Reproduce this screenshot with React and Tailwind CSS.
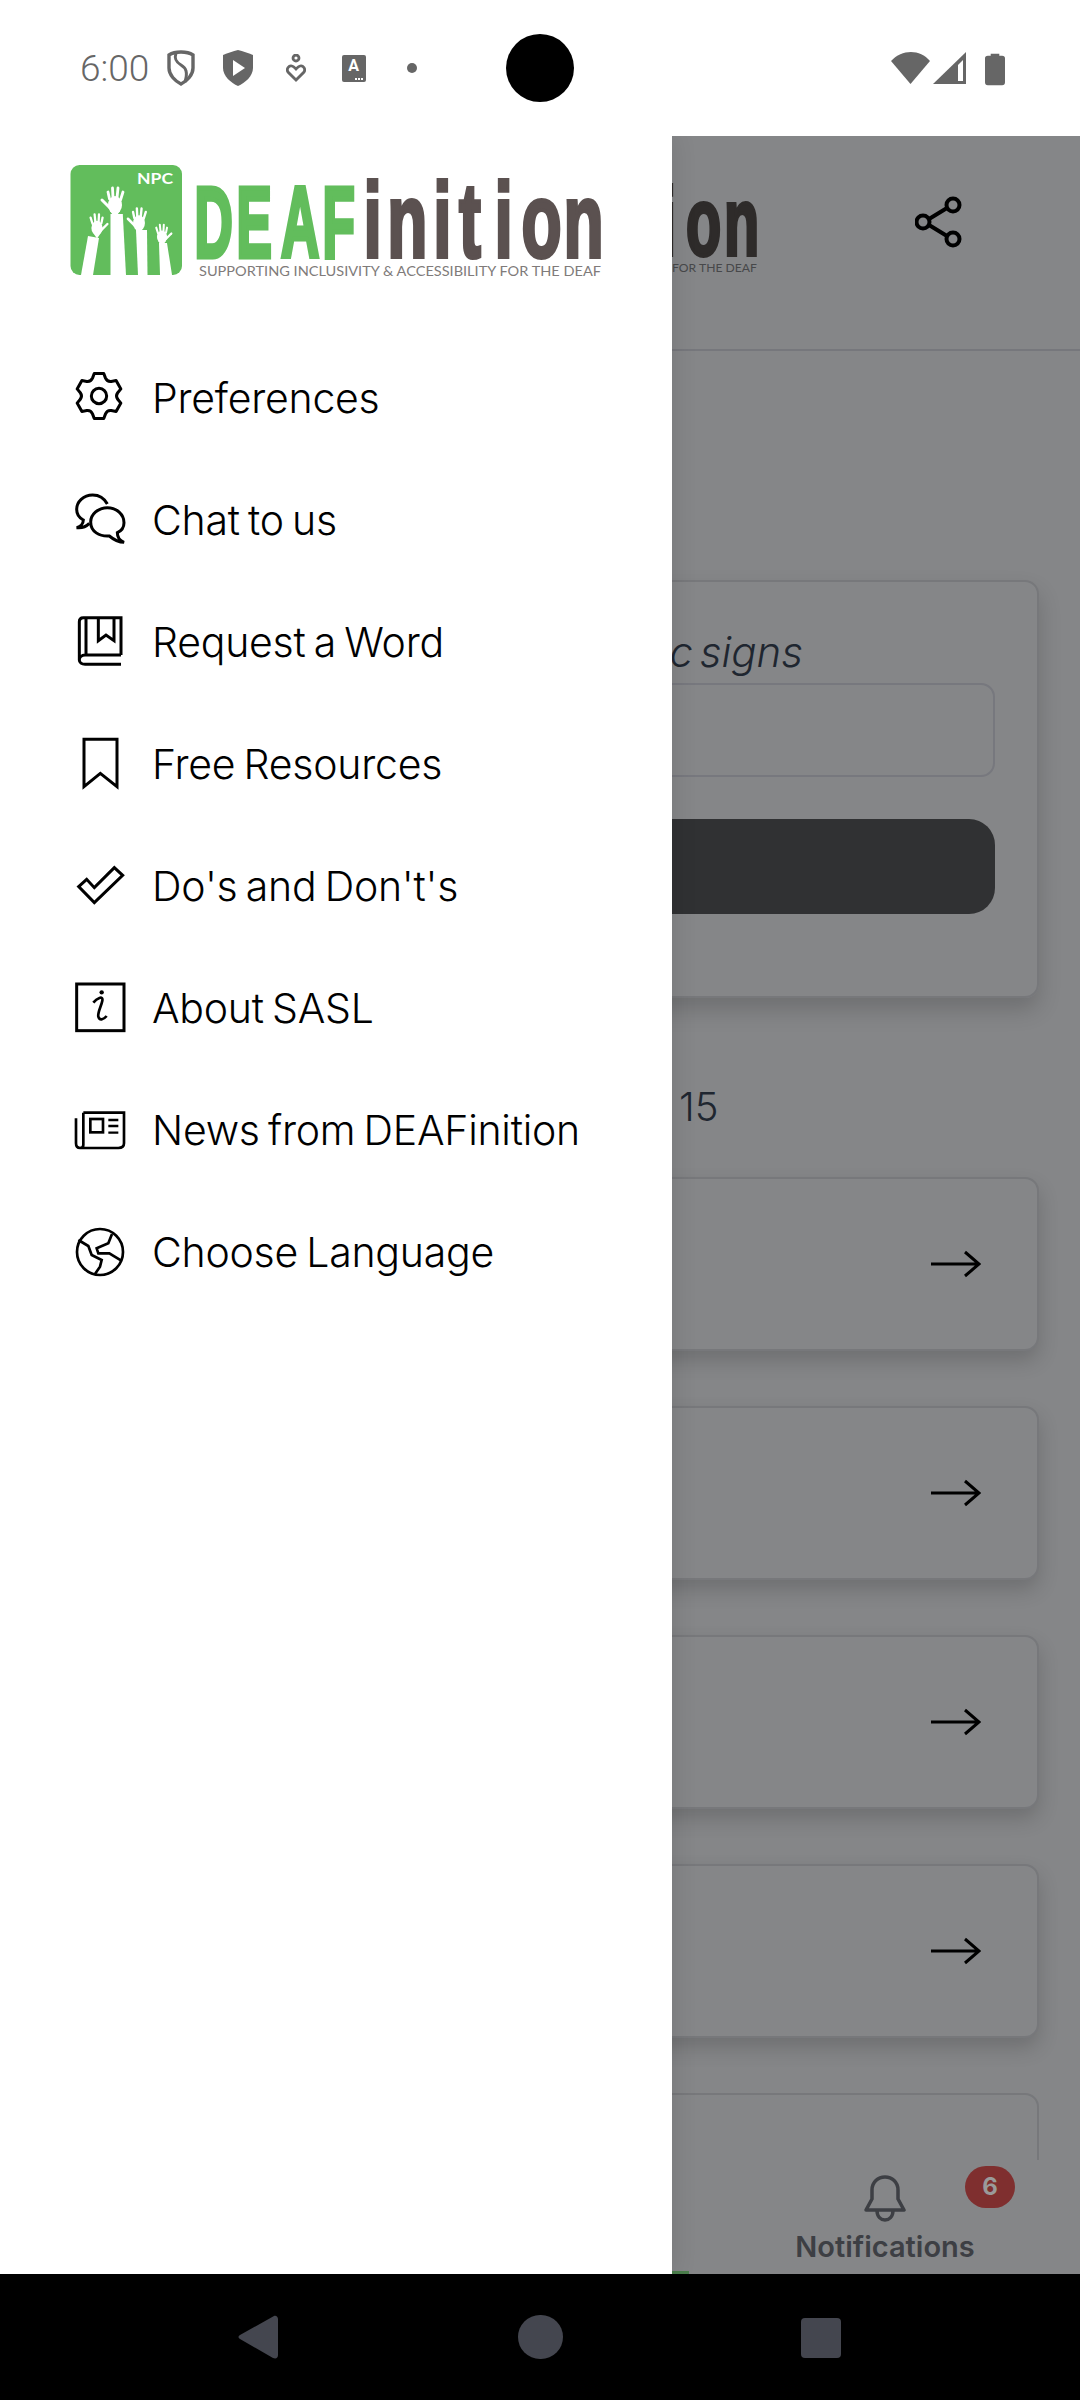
import React from "react";

const Hand = ({ x, y, s, arm, flip }) => (
  <g fill="#fff" stroke="#fff" strokeLinecap="round">
    <polygon points={arm} stroke="none" />
    <g transform={`translate(${x} ${y}) scale(${flip ? -s : s} ${s})`}>
      <ellipse cx="0" cy="0" rx="7" ry="9" stroke="none" />
      <path d="M-5.500 -6L-7 -13M-2 -7L-2.500 -17M2 -7L3 -17M5.500 -5L8 -13" strokeWidth="2.8" />
      <path d="M-5 3L-13 -5" strokeWidth="3" />
      <path d="M-5 6L0 13L5 6Z" stroke="none" />
    </g>
  </g>
);

const xs = (list, s) => list.map((v) => (v / s).toFixed(1)).join(" ");

const Logo = () => (
  <svg width="540" height="116" viewBox="70 163 540 116" className="block overflow-visible">
    <rect x="70.5" y="165" width="111.5" height="110" rx="9" fill="#62bd5c" />
    <text x="137" y="183.500" fontSize="15.500" fontWeight="700" fill="#fff" fontFamily="Lato, sans-serif" textLength="36" lengthAdjust="spacingAndGlyphs">NPC</text>
    <Hand x="115" y="205" s="1" arm="110.500,214 122.800,214 126,275 110.500,275" />
    <Hand x="97" y="228" s="0.8" arm="88,236 99,238 93,275 81,275" flip />
    <Hand x="139" y="223" s="0.85" arm="136,230 147,230 147.500,275 138,275" />
    <Hand x="162" y="237" s="0.72" arm="159,243 167,243 172,275 160,275" flip />
    <g fontFamily="'Liberation Sans', sans-serif" fontWeight="700">
      <g transform="translate(0 257) scale(0.53 1)">
        <text x={xs([194.500, 236.500, 281, 322.500], 0.53)} y="0" fontSize="100" fill="#62bd5c" stroke="#62bd5c" strokeWidth="5">DEAF</text>
      </g>
      <g transform="translate(0 257) scale(0.62 1)">
        <text x={xs([363.400, 387.400, 433.400, 459, 494.400, 521.400, 563.400], 0.62)} y="0" fontSize="106" fill="#5b5150" stroke="#5b5150" strokeWidth="4">inition</text>
      </g>
    </g>
    <text x="199" y="276" fontSize="13" fill="#807b7a" fontFamily="Lato, sans-serif" textLength="402" lengthAdjust="spacingAndGlyphs">SUPPORTING INCLUSIVITY &amp; ACCESSIBILITY FOR THE DEAF</text>
  </svg>
);

const StatusBar = () => (
  <div className="h-[136px] bg-white flex items-center relative z-20 shrink-0">
    <div className="flex items-center pl-[80px] h-full w-full">
      <span className="text-[37px] leading-none text-[#666] w-[87px]" style={{ fontFamily: "Roboto, sans-serif", fontWeight: 300 }}>6:00</span>
      <svg width="28" height="36" viewBox="0 0 28 36" fill="none" stroke="#666" strokeWidth="3.400" className="mr-[28px]">
        <path d="M14 2C19 2 23 3 26 5V18C26 25 20 31 14 34C8 31 2 25 2 18V5C5 3 9 2 14 2Z" />
        <path d="M9 3C7 9 9 12 14 15C19 18 21 22 18 32" strokeWidth="3" />
      </svg>
      <svg width="30" height="36" viewBox="0 0 30 36" className="mr-[33px]">
        <path d="M15 0C20 1 25 3 30 5V18C30 26 22 33 15 36C8 33 0 26 0 18V5C5 3 10 1 15 0Z" fill="#666" />
        <path d="M10 10L22 18L10 26Z" fill="#fff" />
      </svg>
      <svg width="20" height="28" viewBox="0 0 20 28" fill="none" stroke="#666" strokeWidth="2.800" className="mr-[36px]">
        <circle cx="10" cy="4" r="3" />
        <path d="M10 26L2 18C0 15 3 11 6 12C8 12.500 9 14 10 15C11 14 12 12.500 14 12C17 11 20 15 18 18Z" />
      </svg>
      <div className="w-[24px] h-[27px] rounded-[2px] bg-[#666] relative flex items-center justify-center mr-[41px]">
        <span className="text-white text-[16px] font-bold leading-none -mt-[5px] -ml-[1px]" style={{ fontFamily: "Roboto, sans-serif" }}>A</span>
        <span className="absolute right-[3px] bottom-[2px] flex gap-[1px]">
          <i className="block w-[2px] h-[2px] bg-white" />
          <i className="block w-[2px] h-[2px] bg-white" />
          <i className="block w-[2px] h-[2px] bg-white" />
        </span>
      </div>
      <div className="w-[10px] h-[10px] rounded-full bg-[#666]" />
    </div>
    <div className="absolute left-[506px] top-[34px] w-[68px] h-[68px] rounded-full bg-black" />
    <div className="absolute left-[891px] top-[51px] flex items-start">
      <svg width="40" height="34" viewBox="0 0 40 34"><path d="M0 10C11 -2 29 -2 39 10L19.500 33Z" fill="#666" /></svg>
      <svg width="34" height="34" viewBox="0 0 34 34" className="ml-[2px]"><path d="M33 1V33H0Z" fill="#666" /><path d="M25 14V30H30V9Z" fill="#fff" /></svg>
      <svg width="20" height="35" viewBox="0 0 21 35" className="ml-[18px]"><path d="M6 2H15V4H18C20 4 21 5 21 7V32C21 34 20 35 18 35H3C1 35 0 34 0 32V7C0 5 1 4 3 4H6Z" fill="#666" /></svg>
    </div>
  </div>
);

const gearPath = (cx, cy, ro, rr, a1, a2) => {
  const p = (r, deg) => {
    const t = (deg * Math.PI) / 180;
    return `${(cx + r * Math.cos(t)).toFixed(1)} ${(cy + r * Math.sin(t)).toFixed(1)}`;
  };
  let d = "";
  for (let k = 0; k < 6; k++) {
    const a = -90 + 60 * k;
    d += `${k === 0 ? "M" : "L"}${p(rr, a - a2)}L${p(ro, a - a1)}L${p(ro, a + a1)}L${p(rr, a + a2)}`;
    d += `Q${p(rr - 8, a + 30)} ${p(rr, a + 60 - a2)}`;
  }
  return d + "Z";
};

const Glyph = ({ c, children }) => (
  <svg width="60" height="60" viewBox={`60 ${c - 90} 180 180`} fill="none" stroke="#000" strokeWidth="9" className="shrink-0">
    {children}
  </svg>
);

const items = [
  ["Preferences",
    <Glyph c={141}>
      <path d={gearPath(147, 138, 69, 57, 12, 20)} strokeLinejoin="round" />
      <circle cx="147" cy="138" r="23" />
    </Glyph>],
  ["Chat to us",
    <Glyph c={507}>
      <path d="M172 462C160 440 140 435 128 435C100 435 80 455 80 478C80 495 90 505 100 510C100 520 92 530 80 533C95 535 110 528 118 520" />
      <path d="M172 473C200 473 222 493 222 518C222 532 215 542 202 548C202 560 210 572 222 577C205 577 190 568 178 558C148 560 122 545 122 516C122 493 145 473 172 473Z" />
    </Glyph>],
  ["Request a Word",
    <Glyph c={873}>
      <path d="M213 915H105C95 915 88 922 88 930C88 938 95 943 105 943H213M88 930V815C88 808 92 803 100 803H213V915M108 803V915" />
      <path d="M145 803V872L168 855L192 872V803" />
    </Glyph>],
  ["Free Resources",
    <Glyph c={249}>
      <path d="M102 178H201V320L151 280L102 320Z" />
    </Glyph>],
  ["Do's and Don't's",
    <Glyph c={615}>
      <path d="M86 620L110 598L133 623L193 563L218 586L133 668Z" />
    </Glyph>],
  ["About SASL",
    <Glyph c={981}>
      <rect x="80" y="912" width="142" height="140" />
      <circle cx="155" cy="937" r="6.500" fill="#000" stroke="none" />
      <path d="M130 968C140 955 160 945 157 962C154 978 142 998 145 1010C148 1022 160 1020 170 1008" strokeWidth="8" />
    </Glyph>],
  ["News from DEAFinition",
    <Glyph c={117}>
      <path d="M100 68H222V160C222 170 215 174 205 174H90C82 174 78 170 78 160V85M100 68V165C100 171 96 174 90 174" strokeWidth="8" />
      <rect x="121" y="87" width="38" height="40" strokeWidth="8" />
      <path d="M175 90H205M175 108H205M175 128H205" strokeWidth="7" />
    </Glyph>],
  ["Choose Language",
    <Glyph c={483}>
      <circle cx="150" cy="486" r="69" strokeWidth="8" />
      <path d="M85 450L115 468L125 495L155 510L150 530L135 552" strokeWidth="8" />
      <path d="M186 432L175 460L140 475L145 490L178 490L214 512" strokeWidth="8" />
    </Glyph>],
];

const Drawer = () => (
  <div className="w-[672px] shrink-0 bg-white relative z-10 shadow-[0_0_24px_rgba(0,0,0,0.12)]">
    <div className="pl-[70px] pt-[27px] h-[200px]"><Logo /></div>
    <nav>
      {items.map(([label, icon]) => (
        <div key={label} className="flex items-center h-[122px] pl-[70px] gap-[22px]">
          {icon}
          <span className="text-[41px] pt-[3px] font-light text-black tracking-[-0.25px] [word-spacing:-3px] whitespace-nowrap" style={{ fontFamily: "Inter, sans-serif" }}>{label}</span>
        </div>
      ))}
    </nav>
  </div>
);

const RowCard = () => (
  <div className="h-[174px] -ml-[60px] mr-[41px] mb-[55px] rounded-[14px] border-2 border-[#77787b] bg-[#858688] shadow-[0_10px_20px_rgba(0,0,0,0.17)] flex items-center justify-end pr-[56px] shrink-0">
    <svg width="50" height="28" viewBox="0 0 50 28" fill="none" stroke="#000" strokeWidth="3"><path d="M0 14H48M34 2L48 14L34 26" /></svg>
  </div>
);

const Behind = () => (
  <div className="flex-1 bg-[#858688] overflow-hidden relative flex flex-col">
    <div className="h-[215px] border-b-2 border-[#76777c] shrink-0 relative flex items-start justify-end pr-[115px] pt-[55px]">
      <svg width="50" height="60" viewBox="0 0 50 60" fill="none" stroke="#000" strokeWidth="4">
        <circle cx="8" cy="31" r="6.500" /><circle cx="38" cy="14" r="6.500" /><circle cx="38" cy="48" r="6.500" />
        <path d="M14 28L32 17M14 34L32 45" />
      </svg>
      <svg width="100" height="100" viewBox="672 180 100 100" className="absolute left-0 top-[44px]">
        <g transform="translate(0 255) scale(0.6 1)">
          <text x={xs([660, 686, 724], 0.6)} y="0" fontFamily="'Liberation Sans', sans-serif" fontWeight="700" fontSize="96" fill="#2e2b2a" stroke="#2e2b2a" strokeWidth="4">ion</text>
        </g>
        <text x="672" y="272" fontSize="12" fill="#47484a" fontFamily="Lato, sans-serif" textLength="85" lengthAdjust="spacingAndGlyphs">FOR THE DEAF</text>
      </svg>
    </div>
    <div className="h-[418px] mt-[229px] -ml-[60px] mr-[41px] rounded-[14px] border-2 border-[#77787b] shadow-[0_12px_22px_rgba(0,0,0,0.17)] shrink-0 flex flex-col items-end pr-[42px] pt-[45px]">
      <span className="text-[42px] leading-[50px] italic font-light text-[#1f2630] [word-spacing:-5px] whitespace-nowrap mr-[192px]" style={{ fontFamily: "Inter, sans-serif" }}>ic signs</span>
      <div className="h-[94px] w-full mt-[6px] rounded-[14px] border-2 border-[#77787e]" />
      <div className="h-[95px] w-full mt-[42px] rounded-[26px] bg-[#303133]" />
    </div>
    <div className="pl-[7px] mt-[84px] h-[50px] text-[40px] leading-[50px] font-light text-[#1f2630] shrink-0" style={{ fontFamily: "Inter, sans-serif" }}>15</div>
    <div className="mt-[45px] flex flex-col">
      <RowCard /><RowCard /><RowCard /><RowCard />
      <div className="h-[174px] -ml-[60px] mr-[41px] rounded-[14px] border-2 border-[#77787b] shrink-0" />
    </div>
    <div className="absolute left-0 right-0 bottom-0 h-[114px] bg-[#858688]">
      <div className="absolute left-0 bottom-0 w-[17px] h-[3px] bg-[#4b7e4c]" />
      <div className="absolute left-[125px] top-0 w-[176px] flex flex-col items-center">
        <svg width="42" height="48" viewBox="0 0 42 48" fill="none" stroke="#3d3f44" strokeWidth="3.500" className="mt-[15px]">
          <path d="M2 35L8 24V15C8 7 14 2 21 2C28 2 34 7 34 15V24L40 35Z" strokeLinejoin="round" />
          <path d="M13 35C13 42 17 45 21 45C25 45 29 42 29 35" />
        </svg>
        <span className="text-[29px] leading-[34px] font-semibold text-[#3d3f44] whitespace-nowrap mt-[7px]" style={{ fontFamily: "Inter, sans-serif" }}>Notifications</span>
      </div>
      <div className="absolute left-[293px] top-[6px] w-[50px] h-[42px] rounded-full bg-[#7f2f2f] flex items-center justify-center text-[#9a9a9a] text-[24px] font-bold" style={{ fontFamily: "Inter, sans-serif" }}>6</div>
    </div>
  </div>
);

const NavBar = () => (
  <div className="h-[126px] bg-black shrink-0 relative z-20 flex items-center justify-center">
    <svg width="40" height="44" viewBox="0 0 40 44" className="absolute left-[238px] top-[41px]"><path d="M36 1C38 0 40 2 40 4V40C40 43 38 44 35 43L2 24C0 23 0 21 2 20Z" fill="#44464f" /></svg>
    <div className="w-[45px] h-[44px] rounded-full bg-[#44464f]" />
    <div className="absolute left-[801px] top-[44px] w-[40px] h-[40px] rounded-[4px] bg-[#44464f]" />
  </div>
);

export default function App() {
  return (
    <div className="w-[1080px] h-[2400px] flex flex-col overflow-hidden bg-white">
      <StatusBar />
      <div className="flex flex-1 min-h-0">
        <Drawer />
        <Behind />
      </div>
      <NavBar />
    </div>
  );
}
